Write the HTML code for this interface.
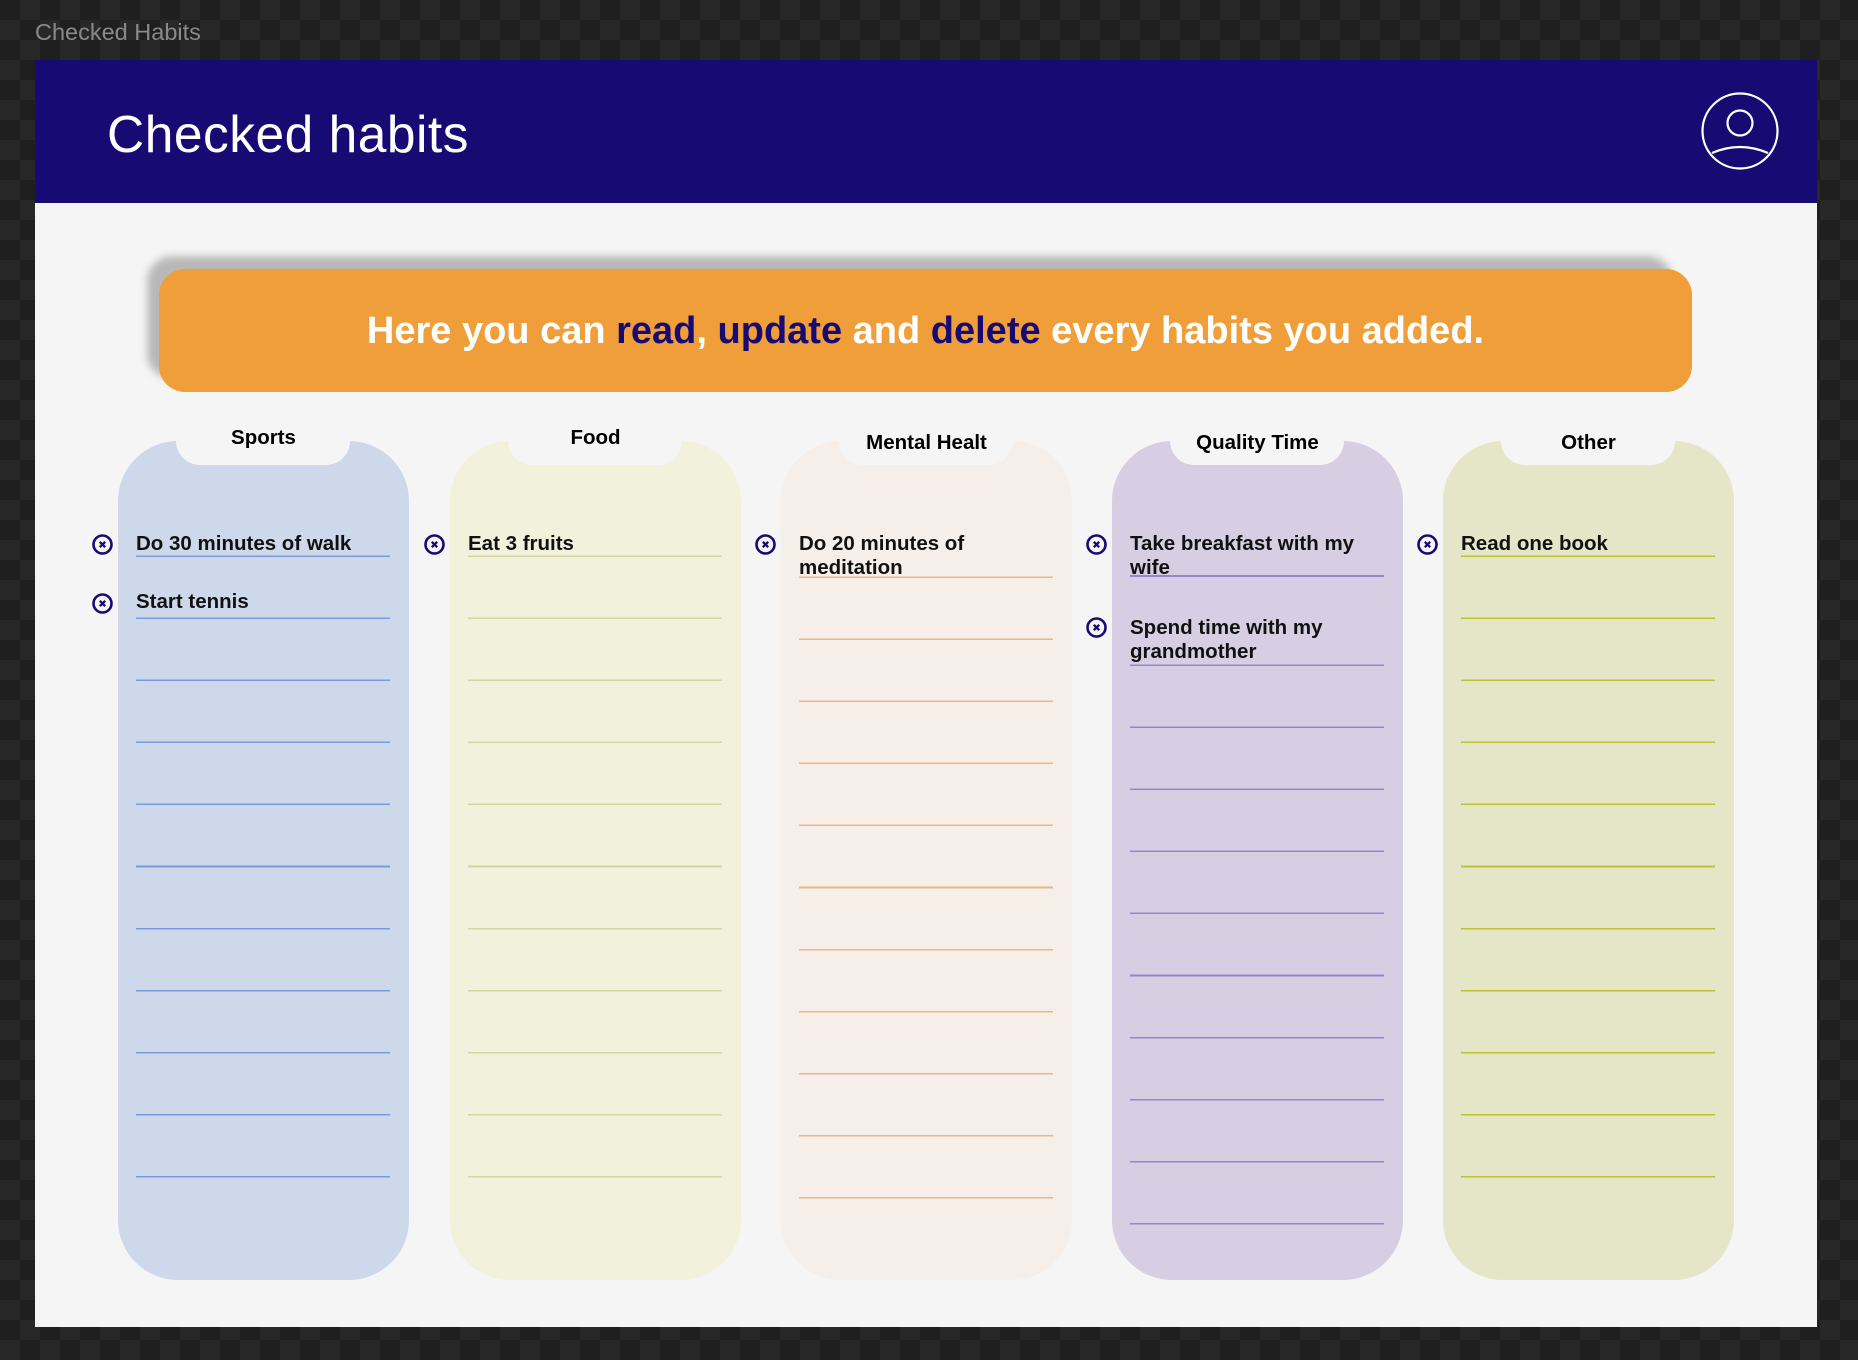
<!DOCTYPE html>
<html><head><meta charset="utf-8"><style>
*{margin:0;padding:0;box-sizing:border-box}
body{width:1858px;height:1360px;overflow:hidden;position:relative;font-family:"Liberation Sans",sans-serif;
background-color:#222;background-image:conic-gradient(#282828 25%,#1f1f1f 0 50%,#282828 0 75%,#1f1f1f 0);background-size:40px 40px}
.apptitle{position:absolute;left:35px;top:19px;font-size:23.5px;color:#8a8a8a}
.frame{position:absolute;left:35px;top:60px;width:1782px;height:1267px;background:#f5f5f5}
.header{position:absolute;left:0;top:0;width:1782px;height:143px;background:#170a73}
.h1{position:absolute;left:72px;top:44px;font-size:51.5px;color:#fff;letter-spacing:0.5px}
.shadow{position:absolute;left:112px;top:196px;width:1526px;height:123px;border-radius:26px;background:#b8b8b8;filter:blur(4px)}
.banner{position:absolute;left:124px;top:209px;width:1533px;height:123px;border-radius:26px;background:#f09e39;color:#fff;font-weight:bold;font-size:38px;text-align:center;line-height:124px}
.banner b{color:#170a73}
.col{position:absolute;top:381px;width:291px;height:839px;border-radius:60px}
.notch{position:absolute;left:58px;top:-2px;width:174px;height:26px;background:#f5f5f5;border-radius:0 0 24px 24px}
.lbl{position:absolute;left:0;width:291px;text-align:center;font-weight:bold;font-size:20.5px;color:#000}
.lines{position:absolute;left:18px;width:254px}
.t{position:absolute;left:18px;width:260px;font-weight:bold;font-size:20.5px;line-height:24px;color:#111}
.ic{position:absolute;left:-26px;width:21px;height:21px}
</style></head><body>
<svg width="0" height="0" style="position:absolute"><defs><g id="x"><circle cx="10.5" cy="10.5" r="9" fill="none" stroke="#170a73" stroke-width="2.6"/><path d="M7.8 7.8L13.2 13.2M13.2 7.8L7.8 13.2" stroke="#170a73" stroke-width="2.3"/></g></defs></svg>
<div class="apptitle">Checked Habits</div>
<div class="frame">
<div class="header"><div class="h1">Checked habits</div>
<svg style="position:absolute;left:1665px;top:31px" width="80" height="80" viewBox="0 0 80 80"><circle cx="40" cy="40" r="37.5" fill="none" stroke="#fff" stroke-width="2.2"/><circle cx="40" cy="32" r="12.5" fill="none" stroke="#fff" stroke-width="2.2"/><path d="M12 62 Q40 50 68 62" fill="none" stroke="#fff" stroke-width="2.2"/></svg>
</div>
<div class="shadow"></div>
<div class="banner">Here you can <b>read</b>, <b>update</b> and <b>delete</b> every habits you added.</div>

<div class="col" style="left:83px;background:#cdd8ea">
<div class="notch"></div><div class="lbl" style="top:-15px">Sports</div>
<div class="lines" style="top:54px;height:683px;background:repeating-linear-gradient(to bottom,transparent 0 60.5px,#7d9ad8 60.5px 62.05px)"></div>
<div class="t" style="top:91px">Do 30 minutes of walk</div><svg class="ic" style="top:152px"><use href="#x"/></svg><svg class="ic" style="top:93px"><use href="#x"/></svg>
<div class="t" style="top:149px">Start tennis</div>
</div>

<div class="col" style="left:415px;background:#f2f1dc">
<div class="notch"></div><div class="lbl" style="top:-15px">Food</div>
<div class="lines" style="top:54px;height:683px;background:repeating-linear-gradient(to bottom,transparent 0 60.5px,#d3d6a0 60.5px 62.05px)"></div>
<div class="t" style="top:91px">Eat 3 fruits</div><svg class="ic" style="top:93px"><use href="#x"/></svg>
</div>

<div class="col" style="left:746px;background:#f6eee8">
<div class="notch"></div><div class="lbl" style="top:-10px">Mental Healt</div>
<div class="lines" style="top:75px;height:683px;background:repeating-linear-gradient(to bottom,transparent 0 60.5px,#eab58a 60.5px 62.05px)"></div>
<div class="t" style="top:91px">Do 20 minutes of<br>meditation</div><svg class="ic" style="top:93px"><use href="#x"/></svg>
</div>

<div class="col" style="left:1077px;background:#d7cee3">
<div class="notch"></div><div class="lbl" style="top:-10px">Quality Time</div>
<div class="lines" style="top:134px;height:2px;background:#9486c8"></div>
<div class="lines" style="top:163px;height:621px;background:repeating-linear-gradient(to bottom,transparent 0 60.5px,#9486c8 60.5px 62.05px)"></div>
<div class="t" style="top:91px">Take breakfast with my<br>wife</div><svg class="ic" style="top:93px"><use href="#x"/></svg>
<div class="t" style="top:175px">Spend time with my<br>grandmother</div><svg class="ic" style="top:176px"><use href="#x"/></svg>
</div>

<div class="col" style="left:1408px;background:#e5e6c7">
<div class="notch"></div><div class="lbl" style="top:-10px">Other</div>
<div class="lines" style="top:54px;height:683px;background:repeating-linear-gradient(to bottom,transparent 0 60.5px,#bcc236 60.5px 62.05px)"></div>
<div class="t" style="top:91px">Read one book</div><svg class="ic" style="top:93px"><use href="#x"/></svg>
</div>
</div>
</body></html>
